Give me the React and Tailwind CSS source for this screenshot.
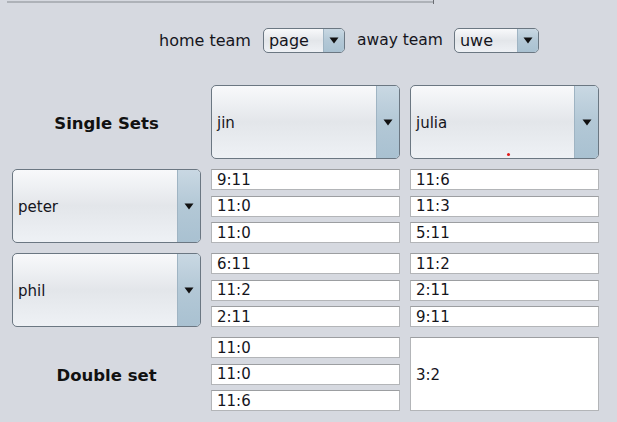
import React from "react";

const font = { fontFamily: '"DejaVu Sans", "Liberation Sans", Arial, sans-serif' };

function Arrow() {
  return (
    <svg width="10" height="7" viewBox="0 0 10 7">
      <path d="M0.5 0.5 L9.5 0.5 L5 6.5 Z" fill="#111" />
    </svg>
  );
}

function Combo({ label, className = "", arrowW = "w-[23px]", textSize = "text-[15px]", pad = "pt-[3px]", children }) {
  return (
    <div
      className={`relative flex items-stretch rounded-[5px] border border-[#6b7782] bg-gradient-to-b from-[#f8f9fb] via-[#e3e6ea] to-[#eef1f5] overflow-hidden ${className}`}
    >
      <div className={`flex-1 flex items-center pl-[5px] ${pad} ${textSize} text-[#15151c]`}>{label}</div>
      <div
        className={`${arrowW} flex items-center justify-center border-l border-[#9fb4c3] bg-gradient-to-b from-[#c9d8e3] via-[#b3c8d6] to-[#a9c1d1]`}
      >
        <Arrow />
      </div>
      {children}
    </div>
  );
}

function Field({ value }) {
  return (
    <div className="h-[21px] bg-white border border-[#b3b5b8] border-t-[#9c9ea1] flex items-center pl-[5px] pt-[1px] text-[15px] text-[#15151c] leading-none">
      {value}
    </div>
  );
}

function Fields({ values }) {
  return (
    <div className="h-[74px] flex flex-col justify-between">
      {values.map((v, i) => (
        <Field key={i} value={v} />
      ))}
    </div>
  );
}

export default function App() {
  return (
    <div className="w-[617px] h-[422px] bg-[#d6d9e0] relative overflow-hidden" style={font}>
      <div className="absolute left-[7px] top-[1px] w-[426px] h-[2px] bg-[#aeb2b8]" />
      <div className="absolute left-[433px] top-0 w-[1px] h-[4px] bg-[#6a6d72]" />

      <div className="pt-[28px] flex items-center">
        <div className="ml-[159px] flex items-center">
          <span className="text-[16px] text-[#15151c] mr-[12px]">home team</span>
          <Combo label="page" className="w-[82px] h-[25px]" arrowW="w-[21px]" textSize="text-[16px]" pad="pt-0" />
          <span className="text-[15.5px] text-[#15151c] ml-[12px] mr-[11px]">away team</span>
          <Combo label="uwe" className="w-[85px] h-[25px]" arrowW="w-[21px]" textSize="text-[16px]" pad="pt-0" />
        </div>
      </div>

      <div className="mt-[32px] ml-[12px] grid grid-cols-[189px_189px_189px] gap-x-[10px] gap-y-[10px] auto-rows-[74px]">
        <div className="flex items-center justify-center pt-[4px] font-bold text-[16.5px] text-[#111]">Single Sets</div>
        <Combo label="jin" className="h-[74px]" arrowW="w-[23px]" />
        <Combo label="julia" className="h-[74px]" arrowW="w-[24px]">
          <div className="absolute left-[96px] top-[67px] w-[3px] h-[3px] rounded-full bg-[#e21b1b]" />
        </Combo>

        <Combo label="peter" className="h-[74px]" arrowW="w-[23px]" />
        <Fields values={["9:11", "11:0", "11:0"]} />
        <Fields values={["11:6", "11:3", "5:11"]} />

        <Combo label="phil" className="h-[74px]" arrowW="w-[23px]" />
        <Fields values={["6:11", "11:2", "2:11"]} />
        <Fields values={["11:2", "2:11", "9:11"]} />

        <div className="flex items-center justify-center pt-[4px] font-bold text-[16.5px] text-[#111]">Double set</div>
        <Fields values={["11:0", "11:0", "11:6"]} />
        <div className="h-[74px] bg-white border border-[#b3b5b8] border-t-[#9c9ea1] flex items-center pl-[5px] pt-[3px] text-[15px] text-[#15151c]">
          3:2
        </div>
      </div>
    </div>
  );
}
